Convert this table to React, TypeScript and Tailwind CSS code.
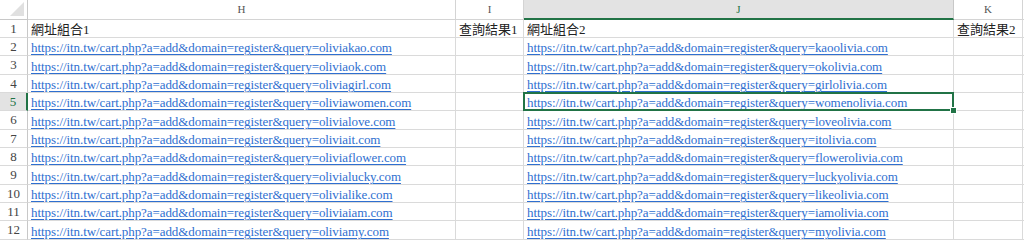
const hRows = [
  "oliviakao.com",
  "oliviaok.com",
  "oliviagirl.com",
  "oliviawomen.com",
  "olivialove.com",
  "oliviait.com",
  "oliviaflower.com",
  "olivialucky.com",
  "olivialike.com",
  "oliviaiam.com",
  "oliviamy.com",
];

const jRows = [
  "kaoolivia.com",
  "okolivia.com",
  "girlolivia.com",
  "womenolivia.com",
  "loveolivia.com",
  "itolivia.com",
  "flowerolivia.com",
  "luckyolivia.com",
  "likeolivia.com",
  "iamolivia.com",
  "myolivia.com",
];

const base = "https://itn.tw/cart.php?a=add&domain=register&query=";
const rowHeights = ["h-[18px]", "h-[18px]", "h-[19px]", "h-[18px]", "h-[18px]", "h-[19px]", "h-[18px]", "h-[18px]", "h-[19px]", "h-[18px]", "h-[18px]", "h-[19px]"];

const font = { fontFamily: '"Liberation Serif", "Noto Sans CJK TC", serif' };

function Link({ text }: { text: string }) {
  return (
    <span className="whitespace-nowrap tracking-[-0.08px] text-[#2f6fd0] underline underline-offset-[2px] decoration-[1px]">
      {text}
    </span>
  );
}

function Cell({
  w,
  children,
  selected,
}: {
  w: string;
  children?: React.ReactNode;
  selected?: boolean;
}) {
  return (
    <div className={`relative ${w} shrink-0 border-r border-b border-[#dadada] flex items-end px-[3px] leading-[15px] overflow-visible`}>
      {children}
      {selected && (
        <div className="absolute z-10 -left-[1px] -top-[1px] -right-[1px] -bottom-[1px] border-2 border-[#217346] pointer-events-none">
          <div className="absolute -right-[5px] -bottom-[5px] w-[7px] h-[7px] bg-[#217346] border border-white" />
        </div>
      )}
    </div>
  );
}

export default function App() {
  return (
    <div className="w-[1024px] h-[244px] bg-white overflow-hidden text-[13px] text-[#222]" style={font}>
      {/* column headers */}
      <div className="flex h-[20px]">
        <div className="relative w-[28px] shrink-0 border-r border-b border-[#c8c8c8] bg-white">
          <div className="absolute right-[3px] bottom-[3px] w-0 h-0 border-l-[14px] border-l-transparent border-b-[14px] border-b-[#e0e0e0]" />
        </div>
        <div className="w-[428px] shrink-0 border-r border-b border-[#d4d4d4] flex items-center justify-center text-[11px] text-[#555]">H</div>
        <div className="w-[68px] shrink-0 border-r border-b border-[#d4d4d4] flex items-center justify-center text-[11px] text-[#555]">I</div>
        <div className="w-[430px] shrink-0 border-r border-b-2 border-b-[#217346] border-r-[#c8c8c8] bg-[#e3e3e3] flex items-center justify-center text-[11px] text-[#217346]">J</div>
        <div className="w-[69px] shrink-0 border-r border-b border-[#d4d4d4] flex items-center justify-center text-[11px] text-[#555]">K</div>
        <div className="flex-1 border-b border-[#d4d4d4]" />
      </div>

      {rowHeights.map((h, i) => {
        const n = i + 1;
        const sel = n === 5;
        return (
          <div key={n} className={`flex ${h}`}>
            <div
              className={`w-[28px] shrink-0 border-b border-[#dadada] flex items-center justify-center text-[13px] ${
                sel ? "bg-[#e3e3e3] text-[#217346] border-r-2 border-r-[#217346]" : "text-[#444] border-r border-r-[#c8c8c8]"
              }`}
            >
              {n}
            </div>
            {n === 1 ? (
              <>
                <Cell w="w-[428px]">網址組合1</Cell>
                <Cell w="w-[68px]">查詢結果1</Cell>
                <Cell w="w-[430px]">網址組合2</Cell>
                <Cell w="w-[69px]">查詢結果2</Cell>
              </>
            ) : (
              <>
                <Cell w="w-[428px]">
                  <Link text={base + hRows[i - 1]} />
                </Cell>
                <Cell w="w-[68px]" />
                <Cell w="w-[430px]" selected={sel}>
                  <Link text={base + jRows[i - 1]} />
                </Cell>
                <Cell w="w-[69px]" />
              </>
            )}
            <div className="flex-1 border-b border-[#dadada]" />
          </div>
        );
      })}
    </div>
  );
}
